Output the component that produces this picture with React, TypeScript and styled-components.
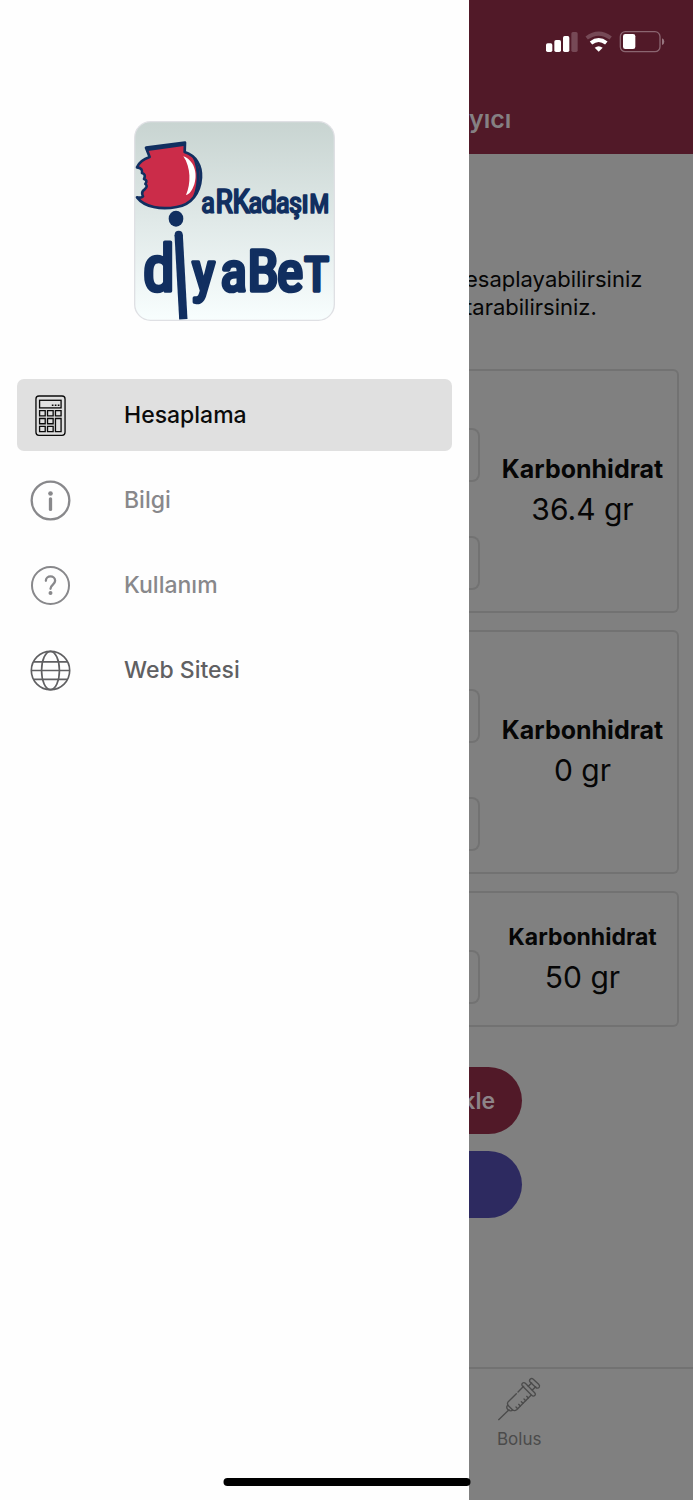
import React from 'react';
import styled, { createGlobalStyle } from 'styled-components';

const GlobalStyle = createGlobalStyle`
  *, *::before, *::after { box-sizing: border-box; }
  body {
    margin: 0;
    background: #808080;
    font-family: Inter, "Liberation Sans", sans-serif;
  }
`;

const Screen = styled.div`
  position: relative;
  display: grid;
  grid-template-columns: minmax(0, 1fr) 224px;
  min-height: 100vh;
`;

const Drawer = styled.aside`
  display: flex;
  flex-direction: column;
  background: #fefefe;
  padding: 121px 17px 0;
`;

const Logo = styled.svg`
  align-self: center;
  width: 201px;
  height: 200px;
  margin-bottom: 58px;
`;

const Nav = styled.nav`
  display: flex;
  flex-direction: column;
  gap: 13px;
`;

const NavLink = styled.a<{ $color: string; $active?: boolean }>`
  display: flex;
  align-items: center;
  gap: 53px;
  height: 72px;
  padding-left: 13px;
  border-radius: 7px;
  background: ${(p) => (p.$active ? '#e0e0e0' : 'transparent')};
  color: ${(p) => p.$color};
  font-size: 23px;
  font-weight: 500;
  line-height: 28px;
  text-decoration: none;
`;

const NavIcon = styled.svg`
  width: 41px;
  height: 41px;
  fill: none;
  stroke: currentColor;
`;

const Page = styled.main`
  display: flex;
  flex-direction: column;
  overflow: hidden;
  background: #808080;
  color: #060606;
`;

const Header = styled.header`
  display: flex;
  flex-direction: column;
  justify-content: space-between;
  height: 154px;
  padding: 30px 28px 21px 0;
  background: #511928;
`;

const StatusIcons = styled.svg`
  align-self: flex-end;
  width: 120px;
  height: 24px;
`;

const Title = styled.h1`
  margin: 0;
  color: #858083;
  font-size: 25px;
  font-weight: 600;
  line-height: 28px;
`;

const Intro = styled.p`
  display: flex;
  flex-direction: column;
  align-items: flex-start;
  margin: 111px 0 48px -4px;
  font-size: 22px;
  line-height: 28px;
  white-space: nowrap;
`;

const Cards = styled.div`
  display: flex;
  flex-direction: column;
  gap: 17px;
  margin-right: 14px;
`;

const Card = styled.section`
  display: flex;
  border: 2px solid #727272;
  border-left: 0;
  border-radius: 0 6px 6px 0;
`;

const Fields = styled.div`
  display: flex;
  flex-direction: column;
  gap: 54px;
  padding: 57px 0 21px;
`;

const Field = styled.input`
  width: 11px;
  height: 54px;
  padding: 0;
  border: 2px solid #727272;
  border-left: 0;
  border-radius: 0 8px 8px 0;
  background: transparent;
`;

const Result = styled.div`
  display: flex;
  flex: 1;
  flex-direction: column;
  align-items: center;
  justify-content: center;
  padding: 0 0 4px 8px;
`;

const ResultLabel = styled.h2<{ $small?: boolean }>`
  margin: 0;
  font-size: ${(p) => (p.$small ? 23 : 25)}px;
  font-weight: 700;
  line-height: 40px;
`;

const ResultValue = styled.span`
  font-size: 30px;
  line-height: 40px;
`;

const Actions = styled.div`
  display: flex;
  flex-direction: column;
  align-items: flex-start;
  gap: 17px;
  margin-top: 40px;
`;

const Action = styled.button<{ $color: string }>`
  width: 53px;
  height: 67px;
  padding: 0 27px 0 0;
  border: 0;
  border-radius: 0 34px 34px 0;
  background: ${(p) => p.$color};
  color: #8d8488;
  display: flex;
  align-items: center;
  justify-content: flex-end;
  font-family: inherit;
  font-size: 23px;
  font-weight: 600;
`;

const TabBar = styled.nav`
  display: flex;
  height: 133px;
  margin-top: auto;
  padding: 8px 0 0 28px;
  border-top: 2px solid #727272;
`;

const Tab = styled.a`
  display: flex;
  flex-direction: column;
  align-items: center;
  align-self: flex-start;
  gap: 8px;
  color: #4b4b4b;
  font-size: 17px;
  font-weight: 400;
  line-height: 20px;
  text-decoration: none;
`;

const TabIcon = styled.svg`
  width: 44px;
  height: 44px;
`;

const HomeIndicator = styled.div`
  position: absolute;
  bottom: 14px;
  left: 50%;
  width: 247px;
  height: 8px;
  border-radius: 4px;
  background: #000;
  transform: translateX(-50%);
`;

const LogoArt = () => (
  <Logo viewBox="30 33 603 600" role="img" aria-label="Arkadaşım Diyabet">
    <defs>
      <linearGradient id="sky" x1="0" y1="0" x2="0" y2="1">
        <stop offset="0" stopColor="#c8d4d1" />
        <stop offset="0.5" stopColor="#e0e9e8" />
        <stop offset="1" stopColor="#f8fefe" />
      </linearGradient>
    </defs>
    <rect x="32" y="35" width="599" height="596" rx="48" fill="url(#sky)" stroke="#dfe0e4" strokeWidth="4" />
    <path
      d="M66 113 L183 98 L182 126 C216 137 233 166 231 203 C228 248 203 284 158 291 C111 300 62 292 39 262 Q52 265 57 259 Q50 246 62 238 Q73 228 64 222 Q72 211 60 207 Q67 193 54 189 Q57 174 39 172 C45 158 58 147 77 141 Z"
      fill="#cb2c49" stroke="#112f60" strokeWidth="8" strokeLinejoin="round"
    />
    <path d="M205 140 C234 164 238 232 200 272 C222 238 224 178 205 140Z" fill="#112f60" />
    <path d="M66 118 L184 102" stroke="#112f60" strokeWidth="11" />
    <path d="M178 139 C210 150 222 190 211 223 C204 243 195 254 186 255 C201 222 201 172 178 139Z" fill="#fff" />
    <ellipse cx="156" cy="326" rx="22" ry="24" fill="#112f60" />
    <path d="M164 374 L178 628" stroke="#112f60" strokeWidth="25" />
    <circle cx="164" cy="374" r="12" fill="#112f60" />
    <g fill="#112f60" stroke="#112f60" strokeLinejoin="round" fontFamily="'Roboto Condensed', Roboto, sans-serif" fontWeight="400">
      <text y="309" strokeWidth="5" fontSize="88">
        <tspan x="231">a</tspan>
        <tspan x="274" fontSize="100">R</tspan>
        <tspan x="325" fontSize="98">K</tspan>
        <tspan x="373">a</tspan>
        <tspan x="412" fontSize="96">d</tspan>
        <tspan x="455">a</tspan>
        <tspan x="494">ş</tspan>
        <tspan x="532" fontSize="100">ı</tspan>
        <tspan x="556" fontSize="80">M</tspan>
      </text>
      <text y="518" strokeWidth="11" fontSize="168">
        <tspan x="57" y="544" fontSize="192">d</tspan>
        <tspan x="204">y</tspan>
        <tspan x="289">a</tspan>
        <tspan x="370" fontSize="174">B</tspan>
        <tspan x="459">e</tspan>
        <tspan x="541" fontSize="142">T</tspan>
      </text>
    </g>
  </Logo>
);

const CalculatorIcon = () => (
  <NavIcon viewBox="90 70 124 124" strokeWidth="4">
    <rect x="108" y="73" width="88" height="119" rx="9" />
    <rect x="119" y="86" width="65" height="23" />
    <path d="M156 101h5M165 101h5M174 101h5" />
    <path d="M119 117h17v16h-17zM143 117h17v16h-17zM167 117h17v16h-17zM119 141h17v16h-17zM143 141h17v16h-17zM119 165h17v16h-17zM143 165h17v16h-17zM167 141h17v40h-17z" />
  </NavIcon>
);

const InfoIcon = () => (
  <NavIcon viewBox="90 327 124 124" strokeWidth="7">
    <circle cx="152" cy="389" r="57" />
    <circle cx="152" cy="368" r="7" fill="currentColor" stroke="none" />
    <path d="M152 384v32" strokeWidth="10" strokeLinecap="round" />
  </NavIcon>
);

const HelpIcon = () => (
  <NavIcon viewBox="90 583 124 124" strokeWidth="6">
    <circle cx="152" cy="645" r="56" />
    <path d="M138 631c0-18 28-18 28 0 0 11-14 12-14 24" strokeWidth="7" strokeLinecap="round" />
    <circle cx="152" cy="668" r="6" fill="currentColor" stroke="none" />
  </NavIcon>
);

const GlobeIcon = () => (
  <NavIcon viewBox="90 839 124 124" strokeWidth="5">
    <circle cx="152" cy="901" r="58" />
    <ellipse cx="152" cy="901" rx="27" ry="58" />
    <path d="M94 901h116M101 875h102M101 928h102" />
  </NavIcon>
);

const navItems = [
  { label: 'Hesaplama', color: '#0b0b0b', active: true, Icon: CalculatorIcon },
  { label: 'Bilgi', color: '#88888b', active: false, Icon: InfoIcon },
  { label: 'Kullanım', color: '#88888b', active: false, Icon: HelpIcon },
  { label: 'Web Sitesi', color: '#606062', active: false, Icon: GlobeIcon },
];

const cards = [
  { value: '36.4 gr', fields: ['Miktar 1', 'Porsiyon 1'] },
  { value: '0 gr', fields: ['Miktar 2', 'Porsiyon 2'] },
  { value: '50 gr', fields: ['Miktar 3'] },
];

export default function App() {
  return (
    <>
      <GlobalStyle />
      <Screen>
        <Drawer>
          <LogoArt />
          <Nav>
            {navItems.map(({ label, color, active, Icon }) => (
              <NavLink key={label} href="#" $color={color} $active={active}>
                <Icon />
                {label}
              </NavLink>
            ))}
          </Nav>
        </Drawer>
        <Page>
          <Header>
            <StatusIcons viewBox="255 90 360 72" aria-hidden="true">
              <g fill="#fff">
                <rect x="258" y="130" width="19" height="26" rx="5" />
                <rect x="283" y="120" width="20" height="36" rx="5" />
                <rect x="309" y="108" width="19" height="48" rx="5" />
                <rect x="334" y="96" width="19" height="60" rx="5" fill="#764956" />
                <path d="M404 143 Q416 134 428 143 L416 155Z" />
                <rect x="489" y="102" width="37" height="45" rx="7" />
              </g>
              <g fill="none" strokeWidth="12">
                <path d="M380 114 Q416 88 452 114" stroke="#764956" />
                <path d="M393 129 Q416 111 439 129" stroke="#fff" />
              </g>
              <rect x="481" y="95" width="119" height="60" rx="15" fill="none" stroke="#8a6570" strokeWidth="4" />
              <path d="M606 115 Q613 118 613 125 T606 135Z" fill="#97757f" />
            </StatusIcons>
            <Title>yıcı</Title>
          </Header>
          <Intro>
            <span>esaplayabilirsiniz</span>
            <span>tarabilirsiniz.</span>
          </Intro>
          <Cards>
            {cards.map((card) => (
              <Card key={card.value}>
                <Fields>
                  {card.fields.map((name) => (
                    <Field key={name} aria-label={name} />
                  ))}
                </Fields>
                <Result>
                  <ResultLabel $small={card.fields.length === 1}>Karbonhidrat</ResultLabel>
                  <ResultValue>{card.value}</ResultValue>
                </Result>
              </Card>
            ))}
          </Cards>
          <Actions>
            <Action $color="#511928">kle</Action>
            <Action $color="#2d2a60" aria-label="Hesapla" />
          </Actions>
          <TabBar>
            <Tab href="#">
              <TabIcon viewBox="113 79 132 132" fill="none" stroke="currentColor" strokeWidth="4" strokeLinecap="round" strokeLinejoin="round">
                <path d="M118 207 L149 177" />
                <path d="M171 129 L146 154 Q142 160 148 166 L160 178 Q166 182 172 177 L215 134" />
                <path d="M176 124 L193 107" />
                <path d="M145 164 Q139 170 146 177 Q154 184 160 178" />
                <path d="M190 97 Q185 101 190 107 L217 134 Q222 139 227 134 Q230 130 226 126 L198 98 Q194 94 190 97Z" />
                <path d="M207 107 L217 97 M219 118 L229 108" />
                <path d="M213 85 Q208 90 213 95 L231 112 Q237 114 240 109 Q242 105 238 101 L221 85 Q217 82 213 85Z" />
                <path d="M202 137l5 5M194 145l5 5M186 153l5 5M178 161l5 5M170 169l5 5" />
              </TabIcon>
              Bolus
            </Tab>
          </TabBar>
        </Page>
        <HomeIndicator />
      </Screen>
    </>
  );
}
